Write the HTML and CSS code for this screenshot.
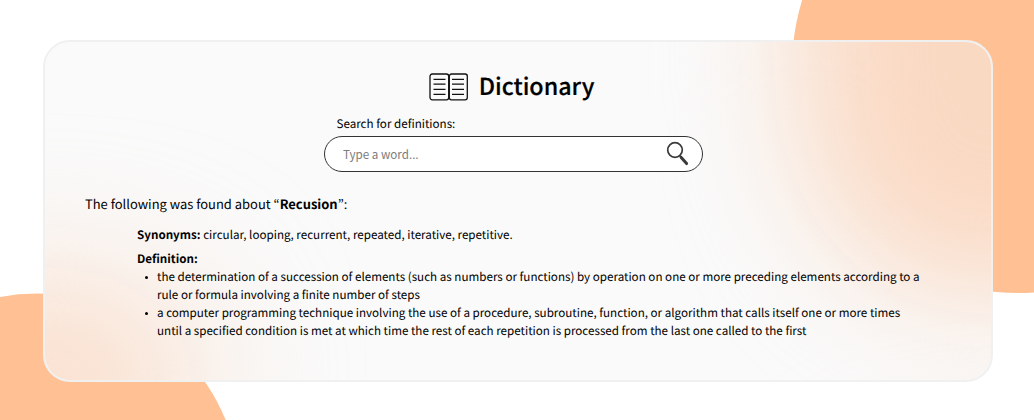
FILE: index.html
```html
<!DOCTYPE html>
<html lang="en">
<head>
<meta charset="utf-8">
<title>Dictionary</title>
<link rel="stylesheet" href="styles.css">
</head>
<body>
<div class="blob blob-right"></div>
<div class="blob blob-left"></div>
<main class="card">
  <div class="glow-layer">
    <div class="glow glow-right"></div>
    <div class="glow glow-below"></div>
    <div class="glow glow-left"></div>
  </div>
  <header class="brand">
    <svg class="book" width="40" height="28" viewBox="0 0 40 28" fill="none" stroke="#111">
      <rect x="1" y="1" width="18.7" height="25.8" rx="2.2" stroke-width="1.3"/>
      <rect x="20.3" y="1" width="18" height="25.8" rx="2.2" stroke-width="1.3"/>
      <path d="M4.5 6.3H16.5M4.5 11.2H16.5M4.5 16.3H16.5M4.5 21.4H16.5M23 6.3H35M23 11.2H35M23 16.3H35M23 21.4H35" stroke-width="1.3"/>
    </svg>
    <h1 class="title">Dictionary</h1>
  </header>
  <form class="search">
    <label class="search-label" for="word">Search for definitions:</label>
    <div class="search-box">
      <input class="search-input" id="word" type="text" placeholder="Type a word...">
      <svg class="glass" width="24" height="26" viewBox="0 0 24 26" fill="none" stroke="#3a3a3a">
        <circle cx="9" cy="9" r="7.3" stroke-width="1.7"/>
        <path d="M13.8 14.8L15.2 16.4" stroke-width="2"/>
        <path d="M15.2 16.4L20.6 22.6" stroke-width="3" stroke-linecap="round"/>
      </svg>
    </div>
  </form>
  <section class="results">
    <p class="found">The following was found about “<b>Recusion</b>”:</p>
    <div class="details">
      <p class="synonyms"><b>Synonyms:</b> circular, looping, recurrent, repeated, iterative, repetitive.</p>
      <p class="heading"><b>Definition:</b></p>
      <ul class="definitions">
        <li>the determination of a succession of elements (such as numbers or functions) by operation on one or more preceding elements according to a<br>rule or formula involving a finite number of steps</li>
        <li>a computer programming technique involving the use of a procedure, subroutine, function, or algorithm that calls itself one or more times<br>until a specified condition is met at which time the rest of each repetition is processed from the last one called to the first</li>
      </ul>
    </div>
  </section>
</main>
</body>
</html>
```
FILE: styles.css
```css
* { box-sizing: border-box; }

html { overflow: hidden; }

body {
  margin: 0;
  width: 1034px;
  height: 420px;
  overflow: hidden;
  position: relative;
  background: #fff;
  color: #000;
  font-family: "Noto Sans CJK KR", "Noto Sans", sans-serif;
  font-size: 11.63px;
  line-height: 18px;
  text-rendering: geometricPrecision;
  padding: 39.5px 41px 38px 42.5px;
}

p, h1, ul { margin: 0; padding: 0; }

.blob {
  position: absolute;
  background: #ffc094;
}
.blob-right {
  right: 0;
  top: 0;
  width: 242px;
  height: 293px;
  clip-path: circle(226px at 226px 67px);
}
.blob-left {
  left: 0;
  bottom: 0;
  width: 242px;
  height: 127px;
  clip-path: circle(204px at 37px 204.5px);
}

.card {
  position: relative;
  isolation: isolate;
  height: 342px;
  padding: 30px 40px 0 40.5px;
  border: 2px solid #f0f0f1;
  border-radius: 27px;
  background: #fafafa;
}

/* Soft colour bleeding through the frosted panel */
.glow-layer {
  position: absolute;
  inset: 0;
  z-index: -1;
  overflow: hidden;
  border-radius: 25px;
}
.glow {
  position: absolute;
  background: #fad9c3;
  filter: blur(62px);
}
.glow-right {
  left: 753px;
  top: -252px;
  width: 392px;
  height: 503px;
  border-radius: 170px / 200px;
}
.glow-below {
  left: 753px;
  top: 425px;
  width: 392px;
  height: 503px;
  border-radius: 170px / 200px;
}
.glow-left {
  left: -155px;
  top: 248px;
  width: 310px;
  height: 180px;
  border-radius: 140px / 90px;
  filter: blur(76px);
}

.brand {
  display: flex;
  align-items: center;
  justify-content: center;
  gap: 11px;
  height: 30px;
  padding-right: 13px;
}
.title { margin-left: -1px; font-size: 23.3px; line-height: 28px; padding-bottom: 4px; font-weight: 500; -webkit-text-stroke: 0.2px #000; }

.search { width: 379px; margin: 13px 0 0 239px; }
.search-label { display: block; padding-left: 12.5px; line-height: 18px; }
.search-box {
  display: flex;
  align-items: center;
  height: 36px;
  margin-top: 3px;
  padding: 0 12px 0 18px;
  border: 1px solid #333;
  border-radius: 18px;
  background: #fff;
}
.search-input {
  flex: 1;
  min-width: 0;
  padding: 1px 0 0;
  border: 0;
  outline: 0;
  background: transparent;
  font: inherit;
}
.search-input::placeholder { color: #7c7c7c; opacity: 1; }

.found { margin-top: 22px; font-size: 12.95px; line-height: 20px; }
.details { padding-left: 52px; }
.synonyms { margin-top: 12px; }
.heading { margin-top: 6px; }
.definitions { list-style: none; }
.definitions li {
  position: relative;
  padding-left: 20px;
  white-space: nowrap;
}
.definitions li::before {
  content: "";
  position: absolute;
  left: 8px;
  top: 8px;
  width: 3px;
  height: 3px;
  border-radius: 50%;
  background: #000;
}
```
